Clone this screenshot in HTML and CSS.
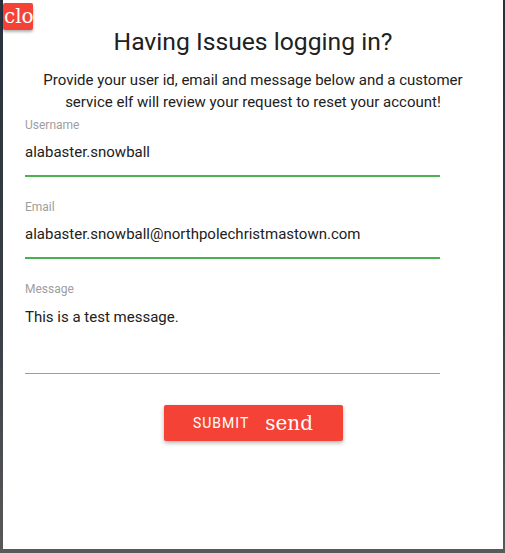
FILE: index.html
```html
<!DOCTYPE html>
<html>
<head>
<meta charset="utf-8">
<link rel="stylesheet" href="styles.css">
</head>
<body>
<div class="dialog">
  <button class="close">close</button>
  <h4 class="title">Having Issues logging in?</h4>
  <p class="intro">Provide your user id, email and message below and a customer service elf will review your request to reset your account!</p>
  <form class="form">
    <div class="field">
      <label class="label">Username</label>
      <div class="value">alabaster.snowball</div>
      <div class="line valid"></div>
    </div>
    <div class="field">
      <label class="label">Email</label>
      <div class="value">alabaster.snowball@northpolechristmastown.com</div>
      <div class="line valid"></div>
    </div>
    <div class="field">
      <label class="label">Message</label>
      <div class="value area">This is a test message.</div>
      <div class="line"></div>
    </div>
    <div class="actions">
      <button type="button" class="submit">SUBMIT <span class="icon">send</span></button>
    </div>
  </form>
</div>
</body>
</html>
```

FILE: styles.css
```css
html, body {
  margin: 0;
  padding: 0;
  height: 100%;
}
body {
  background: linear-gradient(180deg, #27313c 0%, #3a4048 60%, #595959 100%);
  font-family: Roboto, "Noto Sans", sans-serif;
  color: #212121;
  overflow: hidden;
}
.dialog {
  position: relative;
  margin-left: 3px;
  width: 500px;
  height: 549px;
  background: #fff;
  box-sizing: border-box;
  padding: 0 63px 0 22px;
}
.close {
  position: absolute;
  left: 0;
  top: 3px;
  width: 30px;
  height: 27px;
  padding: 0 0 0 1px;
  border: 0;
  border-radius: 2px;
  background: #f44336;
  color: #fff;
  font-family: "DejaVu Serif", "Liberation Serif", serif;
  font-size: 20px;
  line-height: 27px;
  text-align: left;
  overflow: hidden;
  white-space: nowrap;
  box-shadow: 0 2px 3px rgba(0,0,0,0.3);
}
.title {
  margin: 0 -41px 0 0;
  padding-top: 28px;
  font-size: 24.7px;
  font-weight: 400;
  line-height: 28px;
  text-align: center;
  color: #212121;
}
.intro {
  margin: 13px -41px 0 0;
  font-size: 15px;
  line-height: 22px;
  text-align: center;
  color: #212121;
}
.form {
  display: flex;
  flex-direction: column;
}
.field {
  display: flex;
  flex-direction: column;
  margin-top: 5px;
}
.field + .field {
  margin-top: 23px;
}
.label {
  font-size: 12px;
  line-height: 14px;
  color: #9e9e9e;
}
.value {
  margin-top: 10px;
  font-size: 15px;
  line-height: 20px;
  color: #212121;
  height: 33px;
}
.value.area {
  height: 66px;
  margin-top: 11px;
}
.line {
  height: 1px;
  background: #9e9e9e;
  margin-bottom: 1px;
}
.line.valid {
  height: 2px;
  margin-bottom: 0;
  background: #4caf50;
}
.actions {
  display: flex;
  justify-content: center;
  margin: 30px -41px 0 0;
}
.submit {
  width: 179px;
  height: 36px;
  border: 0;
  border-radius: 2px;
  background: #f44336;
  color: #fff;
  font-family: Roboto, sans-serif;
  font-size: 14px;
  letter-spacing: 1px;
  box-shadow: 0 2px 4px rgba(0,0,0,0.3);
  display: flex;
  align-items: center;
  justify-content: center;
  gap: 16px;
}
.icon {
  font-family: "DejaVu Serif", "Liberation Serif", serif;
  font-size: 20px;
  letter-spacing: 0;
}
```
